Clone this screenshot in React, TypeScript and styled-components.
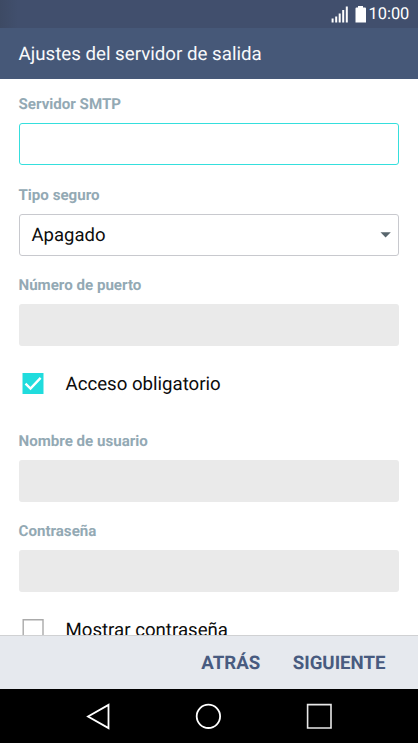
import React from 'react';
import styled, { createGlobalStyle } from 'styled-components';

const GlobalStyle = createGlobalStyle`
  *, *::before, *::after { box-sizing: border-box; }
  html, body { margin: 0; padding: 0; }
  body { font-family: Roboto, sans-serif; text-rendering: geometricPrecision; }
`;

const Screen = styled.div`
  width: 418px;
  height: 743px;
  display: flex;
  flex-direction: column;
  overflow: hidden;
  background: #fff;
`;

const StatusBar = styled.header`
  flex: 0 0 28px;
  display: flex;
  justify-content: flex-end;
  align-items: center;
  padding: 0 8.5px 0 0;
  background: linear-gradient(90deg, #3d4a64 0, #414f6d 18px);
  color: #fff;
`;

const StatusIcons = styled.svg`
  display: block;
  margin-right: 2px;
`;

const Clock = styled.span`
  width: 41px;
  padding-top: 2px;
  font-size: 16.4px;
  line-height: 26px;
`;

const TitleBar = styled.h1`
  flex: 0 0 51px;
  margin: 0;
  padding-left: 18.5px;
  background: #465878;
  color: #f8f9fb;
  font-size: 18.72px;
  font-weight: 400;
  line-height: 53px;
  white-space: nowrap;
  overflow: hidden;
`;

const Form = styled.main`
  flex: 0 0 556px;
  overflow: hidden;
  padding: 0 19px 0 18.5px;
`;

const Field = styled.div`
  height: 90.5px;
  display: flex;
  flex-direction: column;
`;

const Label = styled.label`
  flex: 0 0 44px;
  padding-top: 6px;
  color: #93a9b4;
  font-size: 15.12px;
  font-weight: 700;
  line-height: 38px;
  white-space: nowrap;
`;

const Input = styled.input<{ $active?: boolean }>`
  width: 100%;
  height: 42px;
  margin: 0;
  padding: 0 12px;
  border: ${p => (p.$active ? '1px solid #35dfdd' : '0')};
  border-radius: 3px;
  background: ${p => (p.$active ? '#fff' : '#eaeaea')};
  outline: none;
`;

const Select = styled.div`
  height: 42px;
  display: flex;
  align-items: center;
  justify-content: space-between;
  padding: 1px 7px 0 12px;
  border: 1px solid #c8c9ce;
  border-radius: 3px;
  font-size: 18.5px;
  color: #0c0c0c;
`;

const CheckRow = styled.div`
  height: 65px;
  display: flex;
  align-items: flex-start;
  padding: 22px 0 0 3.5px;
`;

const CheckText = styled.span`
  margin-left: 21.5px;
  color: #0c0c0c;
  font-size: 18.65px;
  line-height: 23px;
  white-space: nowrap;
`;

const Icon = styled.svg`
  display: block;
  flex: none;
`;

const Footer = styled.footer`
  flex: 0 0 54px;
  display: flex;
  justify-content: flex-end;
  gap: 32.5px;
  padding-right: 32.5px;
  border-top: 1px solid #d0d1d3;
  background: #e6e9ee;
`;

const Action = styled.button`
  padding: 0;
  border: 0;
  background: none;
  color: #485b80;
  font: 700 18.65px/52px Roboto, sans-serif;
  text-rendering: inherit;
`;

const NavBar = styled.nav`
  flex: 0 0 54px;
  display: flex;
  align-items: center;
  justify-content: space-between;
  padding: 0 85px 0 84px;
  background: #000;
`;

const CheckBox = ({ checked }: { checked?: boolean }) => (
  <Icon width="22" height="22" viewBox="0 0 22 22" fill="none">
    {checked ? (
      <>
        <path d="M.5 0h21v21H.5z" fill="#20dcdd" />
        <path d="M3.500 10.700 8.500 15.500 18.600 4.900" stroke="#fff" strokeWidth="2.4" />
      </>
    ) : (
      <path d="M1.200 .7h19.800v19.800H1.200z" stroke="#aaa" strokeWidth="1.4" />
    )}
  </Icon>
);

export default function App() {
  return (
    <>
      <GlobalStyle />
      <Screen>
        <StatusBar>
          <StatusIcons width="36" height="18" viewBox="0 0 36 18" fill="#fff">
            <path d="M.6 13.500h2v4h-2zM4.200 11.500h2v6h-2zM7.700 8.500h2v9h-2zM11.200 5h2v12.500h-2zM14.800 1.500h2v16h-2z" />
            <path d="M27 1h5v1.500h2q1 0 1 1v14H24.500v-14q0-1 1-1H27z" />
          </StatusIcons>
          <Clock>10:00</Clock>
        </StatusBar>
        <TitleBar>Ajustes del servidor de salida</TitleBar>
        <Form>
          <Field>
            <Label htmlFor="smtp">Servidor SMTP</Label>
            <Input id="smtp" $active />
          </Field>
          <Field>
            <Label>Tipo seguro</Label>
            <Select>
              Apagado
              <Icon width="11" height="6" viewBox="0 0 11 6">
                <path d="M.5 .3h10.300L5.600 5.600z" fill="#58666d" />
              </Icon>
            </Select>
          </Field>
          <Field>
            <Label htmlFor="port">Número de puerto</Label>
            <Input id="port" disabled />
          </Field>
          <CheckRow>
            <CheckBox checked />
            <CheckText>Acceso obligatorio</CheckText>
          </CheckRow>
          <Field>
            <Label htmlFor="user">Nombre de usuario</Label>
            <Input id="user" disabled />
          </Field>
          <Field>
            <Label htmlFor="password">Contraseña</Label>
            <Input id="password" type="password" disabled />
          </Field>
          <CheckRow>
            <CheckBox />
            <CheckText>Mostrar contraseña</CheckText>
          </CheckRow>
        </Form>
        <Footer>
          <Action>ATRÁS</Action>
          <Action>SIGUIENTE</Action>
        </Footer>
        <NavBar>
          <Icon width="26" height="28" viewBox="0 0 26 28" fill="none">
            <path d="M4 14.500 24.500 2.900v23.200z" stroke="#fff" strokeWidth="1.8" />
          </Icon>
          <Icon width="28" height="28" viewBox="0 0 28 28" fill="none">
            <circle cx="14.400" cy="14.300" r="11.700" stroke="#fff" strokeWidth="1.8" />
          </Icon>
          <Icon width="28" height="28" viewBox="0 0 28 28" fill="none">
            <path d="M2.600 2.600h23.400v23.400H2.600z" stroke="#e8e8e8" strokeWidth="1.600" />
          </Icon>
        </NavBar>
      </Screen>
    </>
  );
}
